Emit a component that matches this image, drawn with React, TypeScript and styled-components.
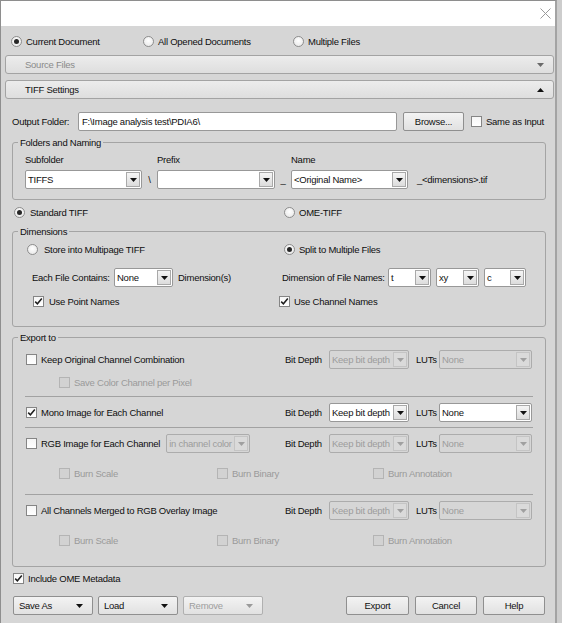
import React from 'react';
import styled, { createGlobalStyle } from 'styled-components';

const GlobalStyle = createGlobalStyle`
  html, body {
    margin: 0;
    padding: 0;
    background: #cdcdcd;
  }
  body {
    font-family: "Liberation Sans", Arial, sans-serif;
    font-size: 9.5px;
    letter-spacing: -0.25px;
    color: #0e0e0e;
  }
  * {
    box-sizing: border-box;
  }
`;

// small drawings
const Tri = ({ up = false, color = '#111' }: { up?: boolean; color?: string }) => (
  <svg width="7" height="4" viewBox="0 0 7 4">
    <path d={up ? 'M0 4 H7 L3.5 0 Z' : 'M0 0 H7 L3.5 4 Z'} fill={color} />
  </svg>
);

const Tick = () => (
  <svg width="9" height="9" viewBox="0 0 9 9">
    <path d="M1.2 4.6 L3.4 6.8 L7.8 1.6" fill="none" stroke="#1e1e1e" strokeWidth="1.5" />
  </svg>
);

/* ---------- frame ---------- */

const Window = styled.div`
  width: 557px;
  height: 623px;
  background: #d6d6d6;
  border-top: 1px solid #8e8e8e;
  border-left: 1px solid #8e8e8e;
  border-right: 2px solid #a3a3a3;
  display: flex;
  flex-direction: column;
`;

const TitleBar = styled.div`
  height: 25px;
  flex: none;
  background: #fff;
  display: flex;
  align-items: center;
  justify-content: flex-end;
  padding-right: 4px;
`;

const Body = styled.div`
  display: flex;
  flex-direction: column;
  padding: 0 1px 0 4px;
`;

/* ---------- controls ---------- */

const RadioDot = styled.span<{ $on?: boolean }>`
  width: 11px;
  height: 11px;
  flex: none;
  border-radius: 50%;
  border: 1px solid #8d8d8d;
  background: radial-gradient(circle at 50% 40%, #ffffff 0%, #e4e4e4 100%);
  display: flex;
  align-items: center;
  justify-content: center;

  &::after {
    content: '';
    width: 5px;
    height: 5px;
    border-radius: 50%;
    background: ${({ $on }) => ($on ? '#262626' : 'transparent')};
  }
`;

const CheckBox = styled.span<{ $disabled?: boolean }>`
  width: 11px;
  height: 11px;
  flex: none;
  border: 1px solid ${({ $disabled }) => ($disabled ? '#b4b4b4' : '#858585')};
  background: ${({ $disabled }) =>
    $disabled ? '#d2d2d2' : 'linear-gradient(#f6f6f6, #ffffff)'};
  display: flex;
  align-items: center;
  justify-content: center;
`;

const Option = styled.label<{ $w?: number; $gap?: number; $disabled?: boolean }>`
  display: inline-flex;
  align-items: center;
  gap: ${({ $gap }) => $gap ?? 4}px;
  width: ${({ $w }) => ($w ? `${$w}px` : 'auto')};
  flex: none;
  height: 14px;
  white-space: nowrap;
  color: ${({ $disabled }) => ($disabled ? '#9a9a9a' : 'inherit')};
`;

type OptProps = {
  text: string;
  on?: boolean;
  radio?: boolean;
  disabled?: boolean;
  w?: number;
  gap?: number;
};

const Opt = ({ text, on, radio, disabled, w, gap }: OptProps) => (
  <Option $w={w} $gap={gap} $disabled={disabled}>
    {radio ? (
      <RadioDot $on={on} />
    ) : (
      <CheckBox $disabled={disabled}>{on ? <Tick /> : null}</CheckBox>
    )}
    <span>{text}</span>
  </Option>
);

const ComboBox = styled.div<{ $w: number; $disabled?: boolean }>`
  width: ${({ $w }) => $w}px;
  height: 19px;
  flex: none;
  display: flex;
  background: ${({ $disabled }) => ($disabled ? '#d6d6d6' : '#fff')};
  border: 1px solid ${({ $disabled }) => ($disabled ? '#acacac' : '#989898')};
  border-radius: 2px;
  color: ${({ $disabled }) => ($disabled ? '#9c9c9c' : '#111')};
`;

const ComboText = styled.span`
  flex: 1;
  min-width: 0;
  padding-left: 2px;
  line-height: 17px;
  white-space: nowrap;
  overflow: hidden;
`;

const ComboArrow = styled.span<{ $disabled?: boolean }>`
  width: 14px;
  flex: none;
  margin: 1px;
  border: 1px solid ${({ $disabled }) => ($disabled ? '#c4c4c4' : '#a9a9a9')};
  background: ${({ $disabled }) =>
    $disabled ? '#dadada' : 'linear-gradient(#f5f5f5, #dcdcdc)'};
  display: flex;
  align-items: center;
  justify-content: center;
`;

const Combo = ({ value = '', w, disabled }: { value?: string; w: number; disabled?: boolean }) => (
  <ComboBox $w={w} $disabled={disabled}>
    <ComboText>{value}</ComboText>
    <ComboArrow $disabled={disabled}>
      <Tri color={disabled ? '#a0a0a0' : '#111'} />
    </ComboArrow>
  </ComboBox>
);

const Button = styled.div<{ $w: number; $disabled?: boolean; $menu?: boolean }>`
  width: ${({ $w }) => $w}px;
  height: 19px;
  flex: none;
  display: flex;
  align-items: center;
  justify-content: ${({ $menu }) => ($menu ? 'space-between' : 'center')};
  padding: ${({ $menu }) => ($menu ? '0 9px 0 5px' : '0')};
  border: 1px solid ${({ $disabled }) => ($disabled ? '#b0b0b0' : '#8f8f8f')};
  border-radius: 2px;
  background: linear-gradient(#f3f3f3, #e1e1e1);
  color: ${({ $disabled }) => ($disabled ? '#9d9d9d' : '#111')};
`;

/* ---------- header part ---------- */

const SourceRow = styled.div`
  margin-top: 8px;
  height: 14px;
  display: flex;
  align-items: center;
  padding-left: 6px;
`;

const SectionBar = styled.div<{ $muted?: boolean; $top: number }>`
  margin-top: ${({ $top }) => $top}px;
  height: 19px;
  border: 1px solid #a3a3a3;
  border-radius: 3px;
  background: linear-gradient(#ececec, #dedede);
  display: flex;
  align-items: center;
  justify-content: space-between;
  padding: 0 9px 0 19px;
  color: ${({ $muted }) => ($muted ? '#8a8a8a' : '#111')};
`;

const OutputRow = styled.div`
  margin-top: 13px;
  height: 19px;
  display: flex;
  align-items: center;
  padding-left: 7px;
`;

const FieldLabel = styled.span<{ $w?: number; $pl?: number }>`
  width: ${({ $w }) => ($w ? `${$w}px` : 'auto')};
  padding-left: ${({ $pl }) => $pl ?? 0}px;
  flex: none;
  white-space: nowrap;
`;

const TextInput = styled.div`
  width: 319px;
  height: 19px;
  flex: none;
  border: 1px solid #989898;
  border-radius: 2px;
  background: #fff;
  padding-left: 3px;
  line-height: 17px;
  margin-right: 6px;
`;

/* ---------- group boxes ---------- */

const Group = styled.fieldset<{ $top: number; $bottom: number; $pad: number }>`
  margin: ${({ $top }) => $top}px 8px 0 7px;
  padding: 0 12px ${({ $bottom }) => $bottom}px ${({ $pad }) => $pad}px;
  border: 1px solid #a4a4a4;
  border-radius: 3px;
  min-width: 0;
`;

const Legend = styled.legend<{ $pad: number }>`
  line-height: 13px;
  padding: 0 2px;
  margin-left: ${({ $pad }) => 5 - $pad}px;
`;

const NamingGrid = styled.div`
  padding-top: 4px;
  display: grid;
  grid-template-columns: 117px 15px 118px 16px 117px auto;
  grid-template-rows: 13px 19px;
  row-gap: 4px;
  align-items: center;
`;

const Joiner = styled.span`
  text-align: center;
  line-height: 19px;
`;

const Suffix = styled.span`
  padding-left: 9px;
  white-space: nowrap;
`;

const FormatRow = styled.div`
  margin-top: 5px;
  height: 14px;
  display: flex;
  align-items: center;
  padding-left: 9px;
`;

const DimRow = styled.div<{ $top: number; $h: number }>`
  margin-top: ${({ $top }) => $top}px;
  height: ${({ $h }) => $h}px;
  display: grid;
  grid-template-columns: 252px auto;
  align-items: center;
`;

const InlineRow = styled.div<{ $indent?: number }>`
  display: flex;
  align-items: center;
  margin-left: ${({ $indent }) => $indent ?? 0}px;
  white-space: nowrap;
`;

const DimCombos = styled.div`
  display: flex;
  gap: 5px;
`;

/* ---------- export ---------- */

const ExportRow = styled.div<{ $top: number }>`
  margin-top: ${({ $top }) => $top}px;
  height: 19px;
  display: grid;
  grid-template-columns: 259px auto;
  align-items: center;
`;

const DepthControls = styled.div`
  display: flex;
  align-items: center;
`;

const BurnRow = styled.div<{ $top: number }>`
  margin-top: ${({ $top }) => $top}px;
  height: 14px;
  display: grid;
  grid-template-columns: 158px 156px auto;
  padding-left: 33px;
`;

const Rule = styled.div<{ $top: number }>`
  margin: ${({ $top }) => $top}px 0 0 -1px;
  height: 1px;
  background: #a2a2a2;
`;

const MetaRow = styled.div`
  margin-top: 4px;
  height: 14px;
  display: flex;
  align-items: center;
  padding-left: 8px;
`;

const ButtonBar = styled.div`
  margin-top: 11px;
  display: flex;
  align-items: center;
  padding: 0 9px 0 8px;
  gap: 5px;
`;

const Spacer = styled.div`
  flex: 1;
`;

const RightButtons = styled.div`
  display: flex;
  gap: 6px;
`;

type DepthProps = { disabled?: boolean };
const Depth = ({ disabled }: DepthProps) => (
  <DepthControls>
    <FieldLabel $w={44}>Bit Depth</FieldLabel>
    <Combo w={80} value="Keep bit depth" disabled={disabled} />
    <FieldLabel $w={30} $pl={7}>
      LUTs
    </FieldLabel>
    <Combo w={93} value="None" disabled={disabled} />
  </DepthControls>
);

const App: React.FC = () => {
  return (
    <>
      <GlobalStyle />
      <Window>
        <TitleBar>
          <svg width="11" height="11" viewBox="0 0 11 11">
            <path d="M0.5 0.5 L10.5 10.5 M10.5 0.5 L0.5 10.5" stroke="#9a9a9a" strokeWidth="1" />
          </svg>
        </TitleBar>

        <Body>
          {/* Source choice */}
          <SourceRow>
            <Opt radio on text="Current Document" w={132} />
            <Opt radio text="All Opened Documents" w={150} />
            <Opt radio text="Multiple Files" />
          </SourceRow>

          <SectionBar $muted $top={7}>
            <span>Source Files</span>
            <Tri color="#6a6a6a" />
          </SectionBar>
          <SectionBar $top={6}>
            <span>TIFF Settings</span>
            <Tri up />
          </SectionBar>

          {/* Output */}
          <OutputRow>
            <FieldLabel $w={66}>Output Folder:</FieldLabel>
            <TextInput>F:\Image analysis test\PDIA6\</TextInput>
            <Button $w={61}>Browse...</Button>
            <span style={{ width: 7 }} />
            <Opt text="Same as Input" gap={4} />
          </OutputRow>

          {/* Folders and Naming */}
          <Group $top={5} $bottom={10} $pad={12}>
            <Legend $pad={12}>Folders and Naming</Legend>
            <NamingGrid>
              <FieldLabel>Subfolder</FieldLabel>
              <span />
              <FieldLabel>Prefix</FieldLabel>
              <span />
              <FieldLabel>Name</FieldLabel>
              <span />
              <Combo w={117} value="TIFFS" />
              <Joiner>\</Joiner>
              <Combo w={118} />
              <Joiner>_</Joiner>
              <Combo w={117} value="<Original Name>" />
              <Suffix>_&lt;dimensions&gt;.tif</Suffix>
            </NamingGrid>
          </Group>

          <FormatRow>
            <Opt radio on text="Standard TIFF" w={270} gap={5} />
            <Opt radio text="OME-TIFF" gap={4} />
          </FormatRow>

          {/* Dimensions */}
          <Group $top={6} $bottom={18} $pad={14}>
            <Legend $pad={14}>Dimensions</Legend>
            <DimRow $top={4} $h={14}>
              <Opt radio text="Store into Multipage TIFF" gap={6} />
              <InlineRow $indent={5}>
                <Opt radio on text="Split to Multiple Files" gap={4} />
              </InlineRow>
            </DimRow>
            <DimRow $top={12} $h={19}>
              <InlineRow $indent={5}>
                <FieldLabel $w={82}>Each File Contains:</FieldLabel>
                <Combo w={59} value="None" />
                <FieldLabel $pl={5}>Dimension(s)</FieldLabel>
              </InlineRow>
              <InlineRow $indent={3}>
                <FieldLabel $w={106}>Dimension of File Names:</FieldLabel>
                <DimCombos>
                  <Combo w={43} value="t" />
                  <Combo w={43} value="xy" />
                  <Combo w={42} value="c" />
                </DimCombos>
              </InlineRow>
            </DimRow>
            <DimRow $top={7} $h={14}>
              <InlineRow $indent={6}>
                <Opt on text="Use Point Names" gap={5} />
              </InlineRow>
              <InlineRow>
                <Opt on text="Use Channel Names" gap={4} />
              </InlineRow>
            </DimRow>
          </Group>

          {/* Export to */}
          <Group $top={4} $bottom={19} $pad={13}>
            <Legend $pad={13}>Export to</Legend>

            <ExportRow $top={6}>
              <Opt text="Keep Original Channel Combination" />
              <Depth disabled />
            </ExportRow>
            <BurnRow $top={6}>
              <Opt disabled text="Save Color Channel per Pixel" />
            </BurnRow>
            <Rule $top={7} />

            <ExportRow $top={6}>
              <Opt on text="Mono Image for Each Channel" />
              <Depth />
            </ExportRow>
            <Rule $top={5} />

            <ExportRow $top={6}>
              <InlineRow>
                <Opt text="RGB Image for Each Channel" />
                <span style={{ width: 6 }} />
                <Combo w={84} value="in channel color" disabled />
              </InlineRow>
              <Depth disabled />
            </ExportRow>
            <BurnRow $top={13}>
              <Opt disabled text="Burn Scale" />
              <Opt disabled text="Burn Binary" />
              <Opt disabled text="Burn Annotation" />
            </BurnRow>
            <Rule $top={14} />

            <ExportRow $top={6}>
              <Opt text="All Channels Merged to RGB Overlay Image" />
              <Depth disabled />
            </ExportRow>
            <BurnRow $top={13}>
              <Opt disabled text="Burn Scale" />
              <Opt disabled text="Burn Binary" />
              <Opt disabled text="Burn Annotation" />
            </BurnRow>
          </Group>

          <MetaRow>
            <Opt on text="Include OME Metadata" />
          </MetaRow>

          {/* Buttons */}
          <ButtonBar>
            <Button $w={80} $menu>
              <span>Save As</span>
              <Tri />
            </Button>
            <Button $w={80} $menu>
              <span>Load</span>
              <Tri />
            </Button>
            <Button $w={80} $menu $disabled>
              <span>Remove</span>
              <Tri color="#9a9a9a" />
            </Button>
            <Spacer />
            <RightButtons>
              <Button $w={63}>Export</Button>
              <Button $w={62}>Cancel</Button>
              <Button $w={62}>Help</Button>
            </RightButtons>
          </ButtonBar>
        </Body>
      </Window>
    </>
  );
};

export default App;
